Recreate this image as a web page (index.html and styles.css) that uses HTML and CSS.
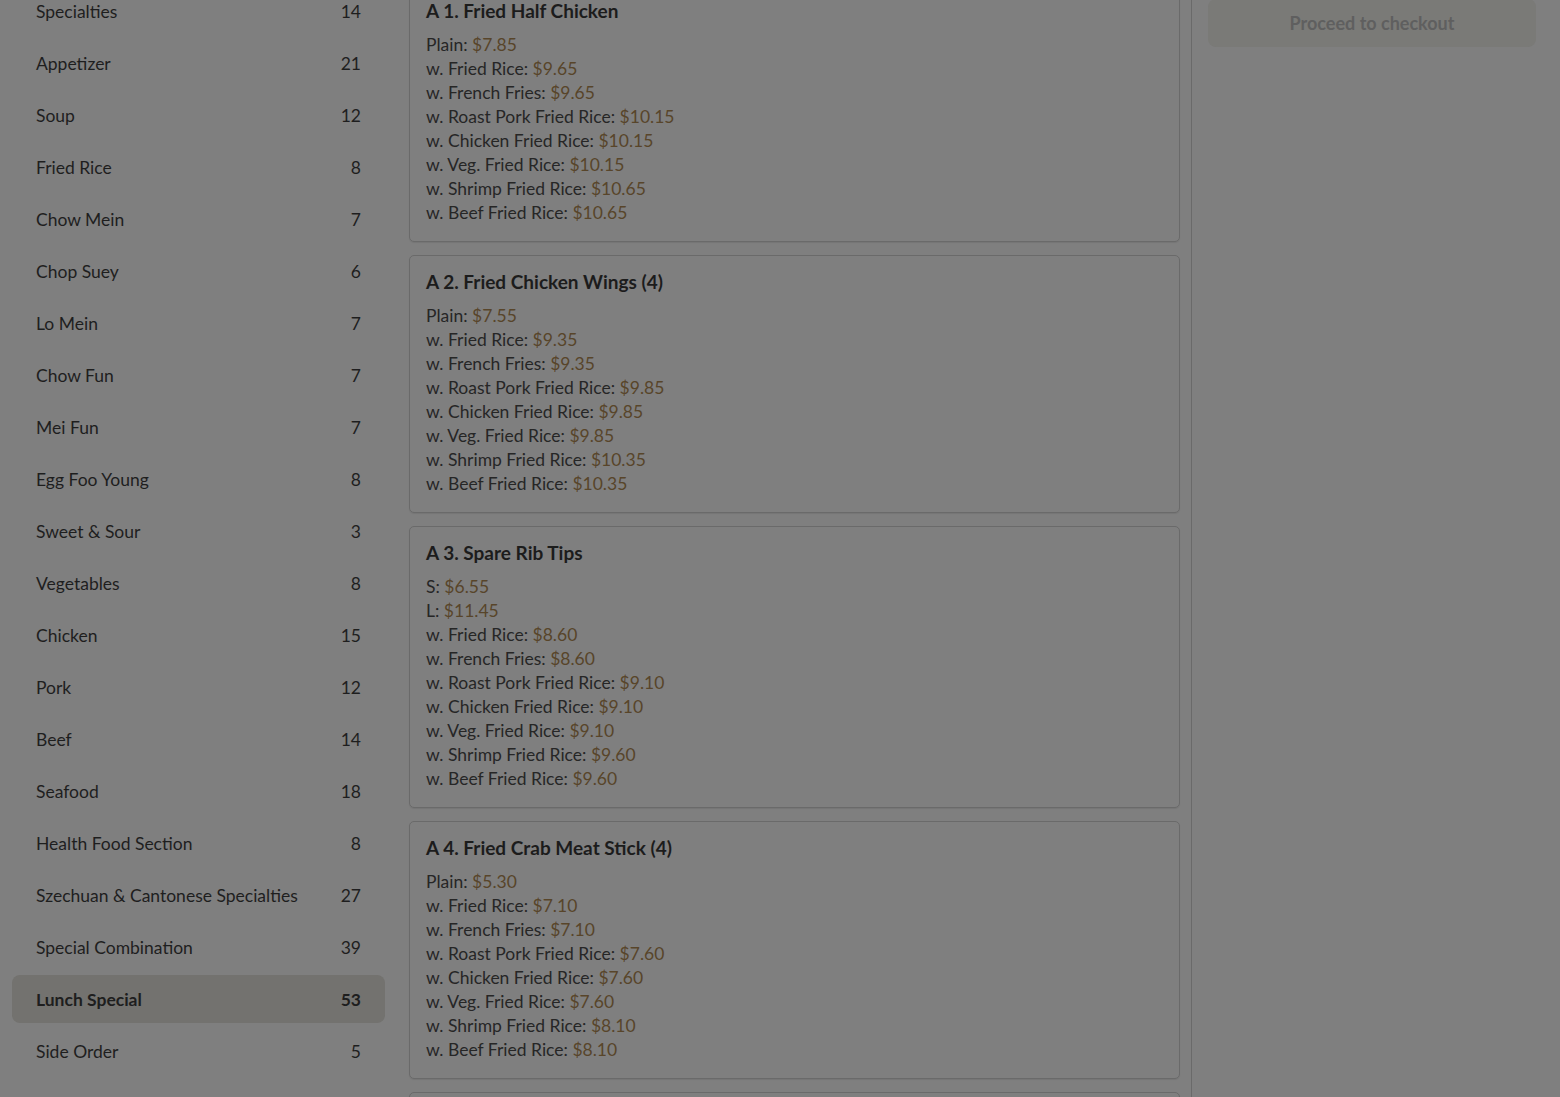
FILE: index.html
```html
<!DOCTYPE html>
<html>
<head>
<meta charset="utf-8">
<link rel="stylesheet" href="styles.css">
</head>
<body>
<div class="viewport">
  <div class="page">
    <aside class="sidebar">
      <ul class="cats">
        <li class="cat"><span>Specialties</span><span>14</span></li>
        <li class="cat"><span>Appetizer</span><span>21</span></li>
        <li class="cat"><span>Soup</span><span>12</span></li>
        <li class="cat"><span>Fried Rice</span><span>8</span></li>
        <li class="cat"><span>Chow Mein</span><span>7</span></li>
        <li class="cat"><span>Chop Suey</span><span>6</span></li>
        <li class="cat"><span>Lo Mein</span><span>7</span></li>
        <li class="cat"><span>Chow Fun</span><span>7</span></li>
        <li class="cat"><span>Mei Fun</span><span>7</span></li>
        <li class="cat"><span>Egg Foo Young</span><span>8</span></li>
        <li class="cat"><span>Sweet &amp; Sour</span><span>3</span></li>
        <li class="cat"><span>Vegetables</span><span>8</span></li>
        <li class="cat"><span>Chicken</span><span>15</span></li>
        <li class="cat"><span>Pork</span><span>12</span></li>
        <li class="cat"><span>Beef</span><span>14</span></li>
        <li class="cat"><span>Seafood</span><span>18</span></li>
        <li class="cat"><span>Health Food Section</span><span>8</span></li>
        <li class="cat"><span>Szechuan &amp; Cantonese Specialties</span><span>27</span></li>
        <li class="cat"><span>Special Combination</span><span>39</span></li>
        <li class="cat active"><span>Lunch Special</span><span>53</span></li>
        <li class="cat"><span>Side Order</span><span>5</span></li>
      </ul>
    </aside>
    <main class="menu">
      <section class="card">
        <h3 class="title">A 1. Fried Half Chicken</h3>
        <div class="opts">
          <div>Plain: <span class="price">$7.85</span></div>
          <div>w. Fried Rice: <span class="price">$9.65</span></div>
          <div>w. French Fries: <span class="price">$9.65</span></div>
          <div>w. Roast Pork Fried Rice: <span class="price">$10.15</span></div>
          <div>w. Chicken Fried Rice: <span class="price">$10.15</span></div>
          <div>w. Veg. Fried Rice: <span class="price">$10.15</span></div>
          <div>w. Shrimp Fried Rice: <span class="price">$10.65</span></div>
          <div>w. Beef Fried Rice: <span class="price">$10.65</span></div>
        </div>
      </section>
      <section class="card">
        <h3 class="title">A 2. Fried Chicken Wings (4)</h3>
        <div class="opts">
          <div>Plain: <span class="price">$7.55</span></div>
          <div>w. Fried Rice: <span class="price">$9.35</span></div>
          <div>w. French Fries: <span class="price">$9.35</span></div>
          <div>w. Roast Pork Fried Rice: <span class="price">$9.85</span></div>
          <div>w. Chicken Fried Rice: <span class="price">$9.85</span></div>
          <div>w. Veg. Fried Rice: <span class="price">$9.85</span></div>
          <div>w. Shrimp Fried Rice: <span class="price">$10.35</span></div>
          <div>w. Beef Fried Rice: <span class="price">$10.35</span></div>
        </div>
      </section>
      <section class="card">
        <h3 class="title">A 3. Spare Rib Tips</h3>
        <div class="opts">
          <div>S: <span class="price">$6.55</span></div>
          <div>L: <span class="price">$11.45</span></div>
          <div>w. Fried Rice: <span class="price">$8.60</span></div>
          <div>w. French Fries: <span class="price">$8.60</span></div>
          <div>w. Roast Pork Fried Rice: <span class="price">$9.10</span></div>
          <div>w. Chicken Fried Rice: <span class="price">$9.10</span></div>
          <div>w. Veg. Fried Rice: <span class="price">$9.10</span></div>
          <div>w. Shrimp Fried Rice: <span class="price">$9.60</span></div>
          <div>w. Beef Fried Rice: <span class="price">$9.60</span></div>
        </div>
      </section>
      <section class="card">
        <h3 class="title">A 4. Fried Crab Meat Stick (4)</h3>
        <div class="opts">
          <div>Plain: <span class="price">$5.30</span></div>
          <div>w. Fried Rice: <span class="price">$7.10</span></div>
          <div>w. French Fries: <span class="price">$7.10</span></div>
          <div>w. Roast Pork Fried Rice: <span class="price">$7.60</span></div>
          <div>w. Chicken Fried Rice: <span class="price">$7.60</span></div>
          <div>w. Veg. Fried Rice: <span class="price">$7.60</span></div>
          <div>w. Shrimp Fried Rice: <span class="price">$8.10</span></div>
          <div>w. Beef Fried Rice: <span class="price">$8.10</span></div>
        </div>
      </section>
      <section class="card card-tail"></section>
    </main>
    <aside class="cart">
      <button class="checkout">Proceed to checkout</button>
    </aside>
  </div>
</div>
</body>
</html>
```

FILE: styles.css
```css
* { box-sizing: border-box; }
html, body { margin: 0; padding: 0; }
body {
  background: #7f7f7f;
  color: #1e1e1e;
  font-family: Lato, "Noto Sans", sans-serif;
  font-size: 17.5px;
}
.viewport {
  height: 1097px;
  overflow: hidden;
}
.page {
  display: grid;
  grid-template-columns: 397px 794px 1fr;
  align-items: stretch;
  margin-top: -16px;
}
.sidebar {
  padding: 3px 12px 0 12px;
}
.cats {
  list-style: none;
  margin: 0;
  padding: 0;
  display: flex;
  flex-direction: column;
  gap: 4px;
}
.cat {
  height: 48px;
  padding: 0 24px;
  display: flex;
  align-items: center;
  justify-content: space-between;
  border-radius: 8px;
}
.cat.active {
  background: #73726f;
  font-weight: 700;
}
.menu {
  padding: 0 11px 0 12px;
  display: flex;
  flex-direction: column;
  gap: 13px;
}
.card {
  border: 1px solid #6a6a6a;
  border-radius: 5px;
  padding: 15px 16px 16px;
  box-shadow: 0 1px 1px rgba(0,0,0,0.08);
}
.card-tail {
  height: 120px;
}
.title {
  margin: 0 0 11px;
  font-size: 19px;
  line-height: 22px;
  font-weight: 700;
  color: #1c1c1c;
}
.opts div {
  line-height: 24px;
  color: #262626;
}
.price {
  color: #58452a;
}
.cart {
  border-left: 1px solid #6a6a6a;
  padding: 15px 24px 0 16px;
}
.checkout {
  display: block;
  width: 100%;
  height: 48px;
  border: none;
  border-radius: 8px;
  background: #7a7a77;
  color: #5f5f5f;
  font-family: Lato, "Noto Sans", sans-serif;
  font-size: 18px;
  font-weight: 700;
}
```
